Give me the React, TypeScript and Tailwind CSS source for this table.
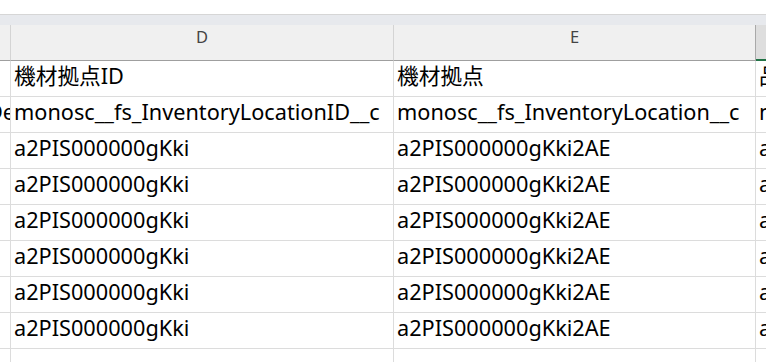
import React from "react";

const rows: { left?: string; d: string; e: string; f: string }[] = [
  { d: "機材拠点ID", e: "機材拠点", f: "品名" },
  { left: "De", d: "monosc__fs_InventoryLocationID__c", e: "monosc__fs_InventoryLocation__c", f: "monosc" },
  ...Array.from({ length: 6 }, () => ({ d: "a2PIS000000gKki", e: "a2PIS000000gKki2AE", f: "a2PIS" })),
  { d: "", e: "", f: "" },
];

export default function App() {
  return (
    <div
      className="w-[766px] h-[362px] overflow-hidden bg-white text-black"
      style={{ fontFamily: "'Noto Sans', 'Noto Sans CJK JP', sans-serif" }}
    >
      <div className="h-[14px] bg-white" />
      <div className="h-px bg-[#d6d6d6]" />
      <div className="h-[10px] bg-[#e7e9ed]" />
      {/* column header */}
      <div className="grid grid-cols-[11px_383px_362px_1fr] h-[36px]">
        <div className="bg-[#f0f0f0] border-r border-[#d4d4d4] border-b border-b-[#9f9f9f]" />
        <div className="bg-[#f0f0f0] border-r border-[#d4d4d4] border-b border-b-[#9f9f9f] flex justify-center pt-px">
          <span className="text-[16.5px] leading-[22px] text-[#444]">D</span>
        </div>
        <div className="bg-[#f0f0f0] border-r border-[#a9a9a9] border-b border-b-[#9f9f9f] flex justify-center pt-px">
          <span className="text-[16.5px] leading-[22px] text-[#444]">E</span>
        </div>
        <div className="bg-[#dedede] border-b-2 border-b-[#217346]" />
      </div>
      {rows.map((r, i) => (
        <div key={i} className="grid grid-cols-[11px_383px_362px_1fr] h-[36px] text-[21.7px] leading-[30px]">
          <div className="border-r border-b border-[#dcdcdc] overflow-hidden flex justify-end">
            {r.left && <span className="whitespace-nowrap mr-[-5px]">{r.left}</span>}
          </div>
          <div className="border-r border-b border-[#dcdcdc] overflow-hidden whitespace-nowrap pl-[3px]">{r.d}</div>
          <div className="border-r border-b border-[#dcdcdc] overflow-hidden whitespace-nowrap pl-[3px]">{r.e}</div>
          <div className="border-b border-[#dcdcdc] overflow-hidden whitespace-nowrap pl-[3px]">{r.f}</div>
        </div>
      ))}
    </div>
  );
}
